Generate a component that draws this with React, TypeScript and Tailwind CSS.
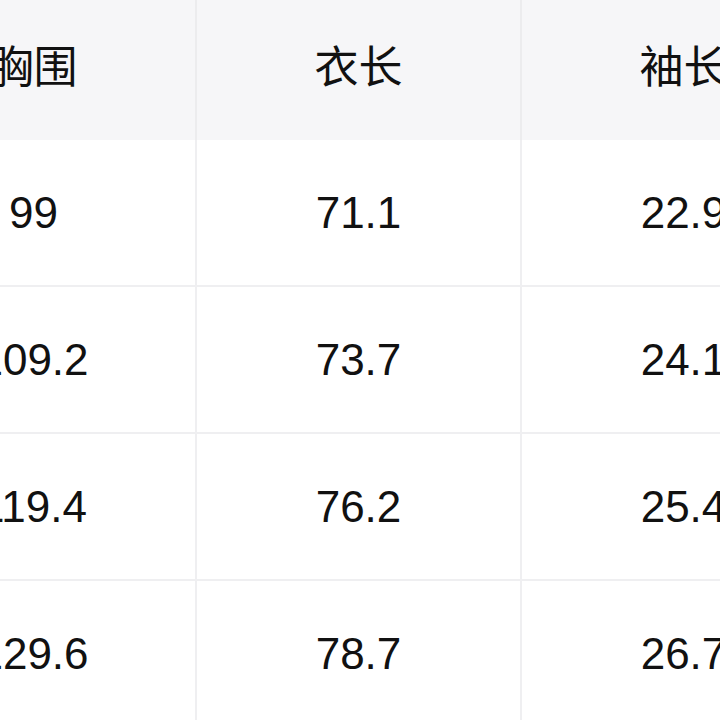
import React from 'react';

const headers = ['胸围', '衣长', '袖长'];

const rows = [
  ['99', '71.1', '22.9'],
  ['109.2', '73.7', '24.1'],
  ['119.4', '76.2', '25.4'],
  ['129.6', '78.7', '26.7'],
];

const App: React.FC = () => {
  return (
    <div
      className="w-[720px] h-[720px] overflow-hidden bg-white text-[#111111]"
      style={{ fontFamily: '"Liberation Sans", "Noto Sans CJK SC", sans-serif' }}
    >
      <div className="-ml-[128px] w-[975px]">
        {/* header */}
        <div className="grid grid-cols-[325px_325px_325px] h-[140px] bg-[#f6f6f8]">
          {headers.map((h) => (
            <div
              key={h}
              className="flex items-center justify-center border-r-2 border-[#ececee] text-[44px] leading-none pb-[4px]"
            >
              {h}
            </div>
          ))}
        </div>

        {/* body */}
        {rows.map((row, i) => (
          <div key={i} className="grid grid-cols-[325px_325px_325px] h-[147px]">
            {row.map((v, j) => (
              <div
                key={j}
                className="flex items-center justify-center border-r-2 border-b-2 border-[#efeff1] text-[44px] leading-none"
              >
                {v}
              </div>
            ))}
          </div>
        ))}
      </div>
    </div>
  );
};

export default App;
